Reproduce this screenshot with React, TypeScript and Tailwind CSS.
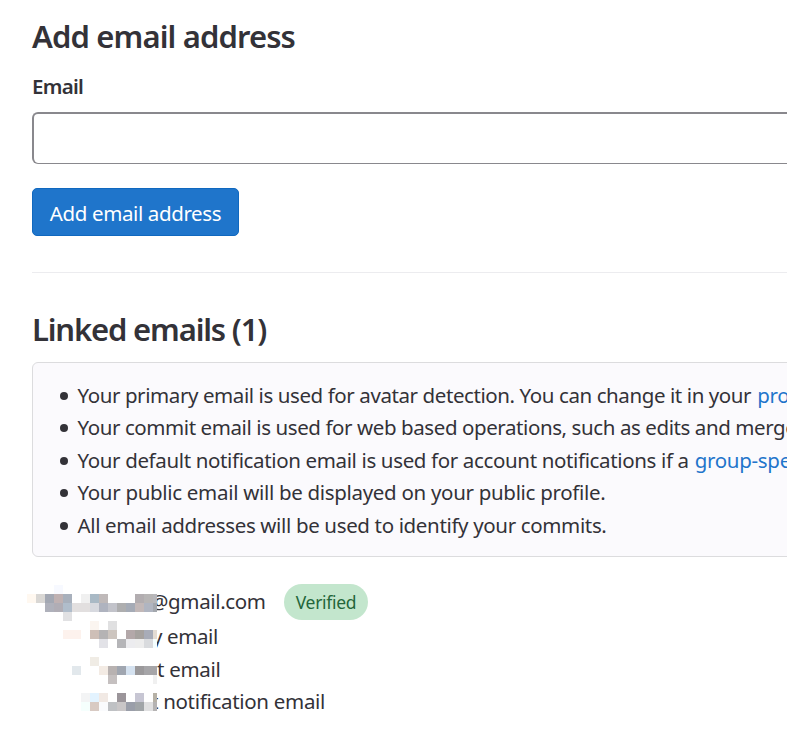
const mosaic: [number, number, string][] = [
  [3, 0, "#f7f9ff"],
  [0, 1, "#fff8f0"], [1, 1, "#d9d7d4"], [2, 1, "#a3a8b3"], [3, 1, "#bfb1b2"], [4, 1, "#a8b0bc"], [6, 1, "#f0f0f0"], [7, 1, "#a9b9c5"], [8, 1, "#bfb9b9"], [12, 1, "#b2adb0"], [13, 1, "#b7b5b5"], [14, 1, "#b7b7bb"],
  [2, 2, "#afb1bb"], [3, 2, "#b0adb5"], [4, 2, "#b0bdcb"], [5, 2, "#e2dfdf"], [6, 2, "#e2dfdf"], [7, 2, "#d7d9df"], [8, 2, "#afb3bf"], [9, 2, "#c2c3ca"], [10, 2, "#aeaeaf"], [11, 2, "#a5abb6"], [12, 2, "#c2b8b8"], [13, 2, "#b0b5c1"], [14, 2, "#a3a7ad"],
  [4, 3, "#e1e1e3"],
  [7, 4, "#fbf5f0"], [9, 4, "#e0e0e1"],
  [4, 5, "#fdf2ed"], [5, 5, "#fdf2ed"], [7, 5, "#cebfb7"], [8, 5, "#b5b3b4"], [9, 5, "#cdc5bf"], [11, 5, "#b3a8a9"], [12, 5, "#a6a29f"], [13, 5, "#a8acb8"], [14, 5, "#e4dcd3"],
  [8, 6, "#e2e2e7"], [10, 6, "#b5b5b8"], [11, 6, "#ececef"], [12, 6, "#ededed"], [13, 6, "#d9dbde"], [14, 6, "#f5ffff"],
  [7, 8, "#f0ece5"],
  [5, 9, "#e2e8ec"], [8, 9, "#f3ebe4"], [9, 9, "#b8b2b1"], [10, 9, "#a0a6b0"], [11, 9, "#d5e2f0"], [12, 9, "#9b999b"], [13, 9, "#a6a5a8"], [14, 9, "#a6a5a8"],
  [9, 10, "#c5c0c0"], [14, 10, "#f0f0f0"],
  [6, 12, "#f3f4f5"], [7, 12, "#e3f3ff"], [8, 12, "#f1e9e4"], [10, 12, "#9b959a"], [12, 12, "#c7c6d3"], [14, 12, "#b6b1a6"],
  [6, 13, "#f5fffd"], [7, 13, "#d8cac3"], [8, 13, "#fafbfd"], [9, 13, "#bfc1c4"], [10, 13, "#c9c6c7"], [11, 13, "#9a9ea9"], [12, 13, "#a1a5a8"], [13, 13, "#e0e0e1"], [14, 13, "#b5b3b3"],
];

function Mosaic() {
  return (
    <svg className="absolute left-[27px] top-[3px]" width="130" height="130" shapeRendering="crispEdges" aria-hidden="true">
      <rect width="130" height="130" fill="#fff" />
      {mosaic.map(([col, row, fill]) => (
        <rect key={`${col}-${row}`} x={col * 9} y={row * 9} width="9" height="9" fill={fill} />
      ))}
    </svg>
  );
}

function Note({ text, link, className }: { text: string; link?: string; className: string }) {
  return (
    <li className="flex h-8 items-start even:h-[33px]">
      <span className="mr-[10px] mt-[13px] size-2 shrink-0 rounded-full bg-[#333238]" />
      <span className={className}>{text}</span>
      {link && <a className="ml-[6px] tracking-[-0.3px] text-[#1f75cb]">{link}</a>}
    </li>
  );
}

export default function App() {
  return (
    <main className="h-[752px] w-[787px] overflow-hidden whitespace-nowrap bg-white font-['Noto_Sans','Open_Sans',sans-serif] text-[20.5px] leading-8 text-[#333238]">
      <section className="pl-8">
        <h2 className="flex h-[70px] items-center pt-0.5 text-[31px] font-semibold leading-10 tracking-[-0.87px]">Add email address</h2>
        <label className="flex h-[42px] items-start text-[20.5px] font-semibold tracking-[-0.7px]">Email</label>
        <div className="h-[52px] w-[800px] rounded-[6px] border-t-2 border-l-2 border-b border-[#89888d] bg-white" />
        <button className="mt-6 flex h-12 w-[207px] items-center justify-center rounded-[5px] border border-[#1068bf] bg-[#1f75cb] pt-0.5 tracking-[-0.38px] text-white">
          Add email address
        </button>
        <hr className="mt-9 border-[#ececef]" />
      </section>
      <section>
        <h2 className="ml-8 flex h-[89px] items-end pb-[13px] text-[31px] font-semibold leading-10 tracking-[-1.17px]">Linked emails (1)</h2>
        <ul className="ml-8 h-[195px] w-[1000px] rounded-[6px] border border-[#dcdcde] bg-[#fbfafd] pl-[26.5px] pt-4">
          <Note className="tracking-[-0.41px]" text="Your primary email is used for avatar detection. You can change it in your" link="profile" />
          <Note className="tracking-[-0.41px]" text="Your commit email is used for web based operations, such as edits and merges." />
          <Note className="tracking-[-0.36px]" text="Your default notification email is used for account notifications if a" link="group-specific" />
          <Note className="tracking-[-0.31px]" text="Your public email will be displayed on your public profile." />
          <Note className="tracking-[-0.35px]" text="All email addresses will be used to identify your commits." />
        </ul>
      </section>
      <section className="relative mt-[25px] pt-[2px]">
        <div className="flex h-9 items-center pl-[150px]">
          <span className="w-[115px] pb-0.5 tracking-[-0.35px]">@gmail.com</span>
          <span className="ml-[19px] flex h-9 w-[84px] items-center justify-center rounded-full bg-[#c3e6cd] text-[17.5px] tracking-[-0.3px] text-[#24663b]">Verified</span>
        </div>
        <p className="h-[33px] pl-[152px] tracking-[-0.4px]">y email</p>
        <p className="h-[32px] pl-[157px] tracking-[-0.3px]">t email</p>
        <p className="h-[32px] pl-[151px] tracking-[-0.3px]">t notification email</p>
        <Mosaic />
      </section>
    </main>
  );
}
